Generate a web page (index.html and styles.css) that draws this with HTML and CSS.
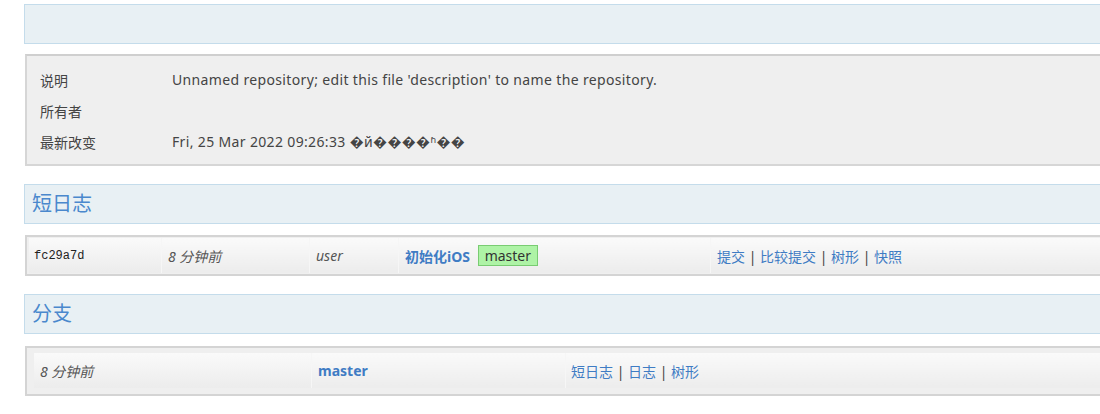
FILE: index.html
```html
<!DOCTYPE html>
<html lang="zh-CN">
<head>
<meta charset="utf-8">
<title>summary</title>
<link rel="stylesheet" href="styles.css">
</head>
<body>
<div class="page">
  <div class="header-bar"></div>

  <div class="info">
    <table class="projects">
      <tr><td class="label">说明</td><td class="value">Unnamed repository; edit this file 'description' to name the repository.</td></tr>
      <tr><td class="label">所有者</td><td class="value"></td></tr>
      <tr><td class="label">最新改变</td><td class="value">Fri, 25 Mar 2022 09:26:33 �й����ʱ��</td></tr>
    </table>
  </div>

  <div class="title">短日志</div>
  <div class="list shortlog">
    <table>
      <tr>
        <td class="sha">fc29a7d</td>
        <td class="age">8 分钟前</td>
        <td class="author">user</td>
        <td class="subject"><a class="bold" href="#">初始化iOS</a> <span class="ref">master</span></td>
        <td class="links"><a href="#">提交</a> | <a href="#">比较提交</a> | <a href="#">树形</a> | <a href="#">快照</a></td>
      </tr>
    </table>
  </div>

  <div class="title">分支</div>
  <div class="list heads">
    <table>
      <tr>
        <td class="age">8 分钟前</td>
        <td class="name"><a class="bold" href="#">master</a></td>
        <td class="links"><a href="#">短日志</a> | <a href="#">日志</a> | <a href="#">树形</a></td>
      </tr>
    </table>
  </div>
</div>
</body>
</html>
```

FILE: styles.css
```css
html, body {
  margin: 0;
  padding: 0;
  overflow: hidden;
  background: #ffffff;
}
body {
  font-family: "Noto Sans", "Noto Sans CJK SC", sans-serif;
  font-size: 14px;
  color: #444;
}
.page {
  padding: 4px 0 0 24px;
  width: 1090px;
}
a {
  color: #3f7cc4;
  text-decoration: none;
}
a.bold {
  font-weight: bold;
}
.header-bar {
  height: 38px;
  background: #e8f0f4;
  border: 1px solid #c4dceb;
}
.info {
  margin-top: 10px;
  margin-left: 1px;
  background: #efefef;
  border: 2px solid #d6d6d6;
  border-top-color: #cfcfcf;
  padding: 8px 0 7px;
}
.info table {
  border-collapse: collapse;
}
.info td {
  height: 31px;
  padding: 0;
  color: #444;
  white-space: nowrap;
  vertical-align: middle;
}
.info td.label {
  width: 132px;
  padding-left: 13px;
}
.info td.value {
  letter-spacing: 0.35px;
}
.title {
  margin-top: 18px;
  height: 38px;
  line-height: 38px;
  background: #e8f0f4;
  border: 1px solid #c4dceb;
  padding-left: 7px;
  font-size: 20px;
  color: #4a88cd;
}
.list {
  margin-top: 11px;
  margin-left: 1px;
  border: 2px solid #d4d4d4;
  background: #efefef;
}
.list table {
  width: 100%;
  border-collapse: collapse;
}
.list td {
  padding: 0 6px;
  white-space: nowrap;
  vertical-align: middle;
  background: linear-gradient(#fafafa, #ececec);
  border-left: 1px solid #f6f6f6;
}
.shortlog {
  padding: 1px 0 1px 2px;
}
.shortlog td {
  height: 35px;
}
.shortlog td.sha {
  width: 121px;
  padding-left: 5px;
  font-family: "Liberation Mono", monospace;
  font-size: 12px;
  color: #222;
  border-left: none;
}
.shortlog td.age { width: 135px; }
.shortlog td.author { width: 76px; }
.shortlog td.subject { width: 299px; }
.subject a {
  vertical-align: middle;
}
.age, .author {
  font-style: italic;
  color: #555;
}
.shortlog td.links {
  padding-left: 6px;
}
.ref {
  display: inline-block;
  margin-left: 4px;
  padding: 0 6px;
  height: 19px;
  line-height: 19px;
  background: #aef3a6;
  border: 1px solid #79cc72;
  color: #333;
  font-size: 14px;
  vertical-align: middle;
}
.heads {
  margin-top: 12px;
  padding: 5px 0 6px 7px;
}
.heads td {
  height: 35px;
}
.heads td.age {
  width: 265px;
  padding-left: 6px;
  border-left: none;
}
.heads td.name { width: 241px; }
.heads td.links { padding-left: 5px; }
```
